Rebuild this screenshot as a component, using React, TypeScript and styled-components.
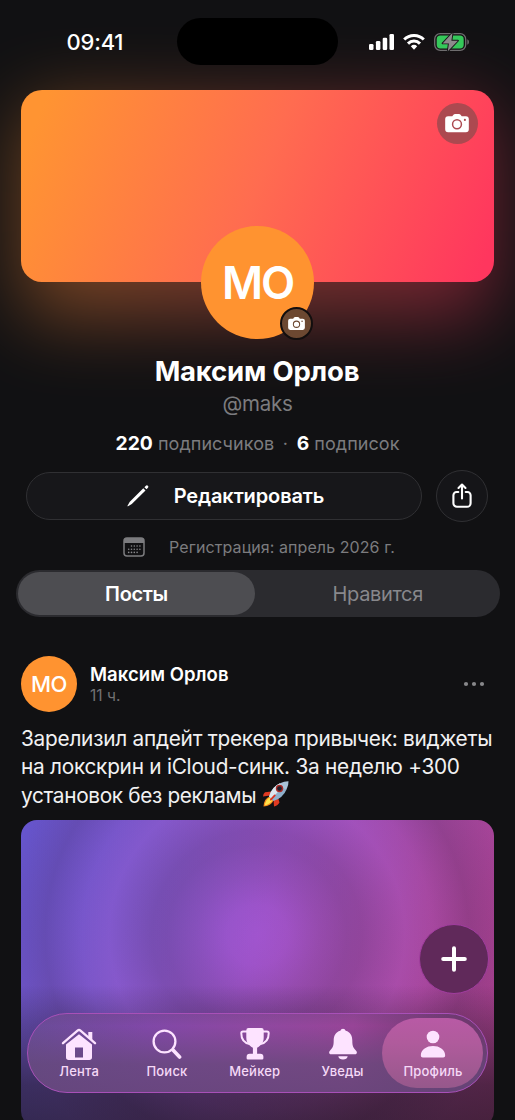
import React from "react";
import styled, { createGlobalStyle } from "styled-components";

const GlobalStyle = createGlobalStyle`
  *, *::before, *::after { box-sizing: border-box; }
  html, body { margin: 0; padding: 0; background: #111113; }
  body { height: 1120px; overflow: hidden; }
`;

const Screen = styled.main`
  position: relative;
  isolation: isolate;
  width: 515px;
  height: 1120px;
  overflow: hidden;
  background: #111113;
  color: #fff;
  font-family: Inter, "Liberation Sans", sans-serif;
  display: flex;
  flex-direction: column;
  -webkit-font-smoothing: antialiased;
  > * { flex-shrink: 0; }
`;

/* status bar */
const StatusBar = styled.header`
  display: grid;
  grid-template-columns: 177px 161px 177px;
  align-items: center;
  height: 83px;
`;
const Clock = styled.time`
  padding-left: 66.5px;
  font-size: 22px;
  font-weight: 500;
  letter-spacing: -0.2px;
  line-height: 26px;
`;
const Island = styled.div`
  height: 47px;
  border-radius: 24px;
  background: #000;
`;
const Indicators = styled.div`
  display: flex;
  align-items: center;
  gap: 9px;
  padding-left: 31px;
  svg { display: block; }
`;

/* profile header */
const Banner = styled.div`
  position: relative;
  height: 192px;
  margin: 7px 21px 0;
  display: flex;
  justify-content: flex-end;
  padding: 13px 16.5px;
  border-radius: 21px;
  background: linear-gradient(112deg, #ff9432 5%, #ff6c50 50%, #ff365e 97%);
  &::before {
    content: "";
    position: absolute;
    z-index: -1;
    inset: 16px 2px -36px;
    border-radius: 20px;
    background: linear-gradient(100deg, #ff9633 0%, #ff6a51 50%, #ff335f 100%);
    filter: blur(38px);
    opacity: 0.42;
  }
`;
const CameraButton = styled.button`
  width: 41px;
  height: 41px;
  padding: 0;
  border: 0;
  border-radius: 50%;
  display: grid;
  place-items: center;
  background: #ac4950;
`;
const Avatar = styled.div<{ $size: number }>`
  position: relative;
  flex: none;
  width: ${(p) => p.$size}px;
  height: ${(p) => p.$size}px;
  border-radius: 50%;
  background: #ff9330;
  display: grid;
  place-items: center;
  font-size: ${(p) => (p.$size > 80 ? 44.5 : 22)}px;
  font-weight: ${(p) => (p.$size > 80 ? 600 : 500)};
  letter-spacing: ${(p) => (p.$size > 80 ? -2 : -0.4)}px;
`;
const AvatarBadge = styled.span`
  position: absolute;
  right: 1px;
  bottom: -1px;
  width: 33px;
  height: 33px;
  border: 2.5px solid #120e0e;
  border-radius: 50%;
  display: grid;
  place-items: center;
  background: #6c4831;
`;
const Profile = styled.section`
  display: flex;
  flex-direction: column;
  align-items: center;
  margin-top: -56px;
  position: relative;
`;
const Name = styled.h1`
  margin: 15px 1px 0 0;
  font-size: 27.5px;
  line-height: 34px;
  font-weight: 700;
  letter-spacing: -0.2px;
`;
const Handle = styled.div`
  margin-top: 3px;
  font-size: 20.5px;
  line-height: 25px;
  letter-spacing: -0.3px;
  color: #7c7c7f;
`;
const Stats = styled.div`
  margin-top: 14px;
  font-size: 18px;
  line-height: 26px;
  letter-spacing: 0.05px;
  color: #7c7c7f;
  b { font-size: 19.3px; color: #fff; font-weight: 700; letter-spacing: 0; }
`;
const Dot = styled.span`
  margin: 0 3.5px;
`;
const Actions = styled.div`
  margin: 13px 2px 0 0;
  width: 462px;
  display: flex;
  align-items: center;
  justify-content: space-between;
`;
const EditButton = styled.button`
  width: 396px;
  height: 48px;
  border: 1px solid #303033;
  border-radius: 24px;
  background: #17171a;
  color: #fff;
  display: flex;
  align-items: center;
  justify-content: center;
  gap: 24px;
  padding: 0 0 0 3px;
  font: 600 20px Inter, sans-serif;
  letter-spacing: -0.12px;
`;
const ShareButton = styled.button`
  width: 52px;
  height: 52px;
  padding: 0;
  border: 1px solid #303033;
  border-radius: 50%;
  background: #151518;
  display: grid;
  place-items: center;
`;
const Joined = styled.div`
  margin-top: 13px;
  height: 24px;
  display: flex;
  align-items: center;
  gap: 24px;
  padding-left: 3px;
  font-size: 16px;
  letter-spacing: 0.08px;
  color: #7c7c7f;
`;
const Tabs = styled.div`
  margin: 11px 15.5px 0 16px;
  height: 47px;
  padding: 2px;
  border-radius: 24px;
  background: #2b2b2f;
  display: flex;
`;
const Tab = styled.button<{ $active?: boolean }>`
  flex: ${(p) => (p.$active ? "0 0 237px" : "1")};
  border: 0;
  padding: ${(p) => (p.$active ? 0 : "0 0 0 3px")};
  border-radius: 22px;
  background: ${(p) => (p.$active ? "#4d4d51" : "transparent")};
  color: ${(p) => (p.$active ? "#fff" : "#88888c")};
  font: ${(p) => (p.$active ? 600 : 400)} 20px Inter, sans-serif;
  letter-spacing: -0.35px;
`;

/* post */
const Post = styled.article`
  margin: 39px 21px 0;
  display: flex;
  flex-direction: column;
`;
const PostHeader = styled.div`
  display: flex;
  align-items: center;
  height: 56px;
`;
const Author = styled.div`
  flex: 1;
  padding: 2px 0 0 13px;
`;
const AuthorName = styled.div`
  font-size: 18.5px;
  line-height: 22px;
  font-weight: 600;
  letter-spacing: 0.05px;
`;
const PostTime = styled.div`
  font-size: 15.5px;
  line-height: 22px;
  color: #717174;
`;
const MoreButton = styled.button`
  width: 22px;
  height: 20px;
  margin-right: 9px;
  padding: 0;
  border: 0;
  background: none;
  display: grid;
  place-items: center;
`;
const PostText = styled.p`
  margin: 13px 0 0;
  font-size: 20.8px;
  line-height: 28.2px;
  color: #f1f1f2;
`;
const Line = styled.span<{ $track: number }>`
  display: block;
  height: 28.2px;
  white-space: nowrap;
  letter-spacing: ${(p) => p.$track}px;
  svg { vertical-align: -5px; }
`;
const Picture = styled.div`
  margin-top: 10.4px;
  height: 307px;
  border-radius: 16px;
  background:
    linear-gradient(180deg, rgba(17, 17, 19, 0) 165px, rgba(17, 17, 19, 0.26) 205px, rgba(17, 17, 19, 0.58) 265px, rgba(17, 17, 19, 0.66) 307px),
    radial-gradient(circle at 236px 115px,
      rgba(190, 100, 255, 0.22) 0, rgba(190, 100, 255, 0.15) 30px,
      rgba(90, 60, 120, 0.1) 62px, rgba(50, 40, 70, 0.15) 90px, rgba(50, 40, 70, 0.14) 105px,
      rgba(200, 120, 255, 0.1) 148px, rgba(200, 120, 255, 0.03) 175px,
      rgba(50, 30, 60, 0.17) 212px, rgba(50, 30, 60, 0) 260px),
    linear-gradient(108deg, #6656d0 0%, #7c55c6 24%, #9850c0 48%, #a5479f 75%, #aa3e8a 100%);
`;

/* floating controls */
const AddButton = styled.button`
  position: absolute;
  left: 419px;
  top: 924px;
  width: 70px;
  height: 70px;
  padding: 0;
  border: 1px solid #a13d9f;
  border-radius: 50%;
  background: #60295a;
  display: grid;
  place-items: center;
`;
const Dock = styled.nav`
  position: absolute;
  left: 27px;
  top: 1013px;
  width: 461px;
  height: 80px;
  border: 1.5px solid #a850b8;
  border-radius: 40px;
  padding: 4px 3.5px 4px 7.3px;
  display: flex;
  background:
    linear-gradient(180deg, rgba(100, 70, 120, 0.3) 0, rgba(100, 70, 120, 0.08) 12px, rgba(100, 72, 120, 0.75) 50px, rgba(100, 70, 120, 0.85) 100%),
    linear-gradient(95deg, #694c9a 0%, #8348ac 26%, #9348a4 50%, #9c449a 70%, #71366d 92%);
`;
const DockItem = styled.button<{ $active?: boolean }>`
  flex: ${(p) => (p.$active ? "0 0 101px" : "1")};
  margin-left: ${(p) => (p.$active ? -4 : 0)}px;
  border: 0;
  padding: 10px 0 0;
  border-radius: 35px;
  background: ${(p) => (p.$active ? "linear-gradient(180deg, #b85aa5 0, #b05b9c 35%, #96588b 100%)" : "transparent")};
  color: #f5d9f7;
  display: flex;
  flex-direction: column;
  align-items: center;
  gap: 3px;
  font: 500 13px/17px Inter, sans-serif;
  letter-spacing: 0.2px;
  svg { display: block; flex: none; }
`;

const Camera = ({ w, hole }: { w: number; hole: string }) => (
  <svg width={w} height={w * 0.78} viewBox="0 0 24 19">
    <path fill="#fff" d="M3 2.4h4.2l1.2-1.6Q9 0 10 0h4q1 0 1.6.8l1.2 1.6H21a3 3 0 0 1 3 3V15.500a3 3 0 0 1-3 3H3a3 3 0 0 1-3-3V5.400a3 3 0 0 1 3-3Z" />
    <circle cx="12" cy="10.400" r="4.500" fill="none" stroke={hole} strokeWidth="1.500" />
    <circle cx="20" cy="6" r="1.100" fill={hole} />
  </svg>
);

const Signal = () => (
  <svg width="25" height="16" viewBox="0 0 25 16" fill="#fff">
    <rect x="0" y="10" width="4.500" height="6" rx="1.300" />
    <rect x="6.900" y="7" width="4.500" height="9" rx="1.300" />
    <rect x="13.700" y="3.700" width="4.500" height="12.300" rx="1.300" />
    <rect x="20.500" y="0" width="4.500" height="16" rx="1.300" />
  </svg>
);

const Wifi = () => (
  <svg width="22" height="16" viewBox="0 0 22 16" fill="none" stroke="#fff" strokeWidth="3">
    <path d="M1.200 5.500a14 14 0 0 1 19.600 0" />
    <path d="M5 9.600a8.500 8.500 0 0 1 12 0" />
    <path d="M7.800 12.300a4.700 4.700 0 0 1 6.400 0L11 15.700Z" fill="#fff" stroke="none" />
  </svg>
);

const Battery = () => (
  <svg width="35" height="20" viewBox="0 0 35 20">
    <rect x="0.700" y="1.700" width="31" height="16.600" rx="5.500" fill="none" stroke="#6f6d6f" strokeWidth="1.300" />
    <rect x="2.700" y="3.600" width="27" height="12.800" rx="3.700" fill="#35c85a" />
    <path d="M33.300 7.200q1.700.8 1.700 2.800t-1.700 2.800Z" fill="#6f6d6f" />
    <path d="M18.500.8 8.600 11.400h6.300L13.800 19.300 23.900 8.700h-6.500Z" fill="#8d8a8c" stroke="#171517" strokeWidth="1.900" strokeLinejoin="round" paintOrder="stroke" />
  </svg>
);

const Pencil = () => (
  <svg width="24" height="24" viewBox="0 0 24 24" fill="#fff">
    <path d="M17.300 4.200 19.500 6.400 5.800 20 2 22.300Q1.200 22.500 1.500 21.700L3.800 17.800Z" />
    <path d="M18.400 3.200 19.900 1.700Q20.900.9 21.900 1.800t.1 2L20.500 5.300Z" />
  </svg>
);

const Share = () => (
  <svg width="20" height="26" viewBox="0 0 20 26" fill="none" stroke="#fff" strokeWidth="2.100" strokeLinecap="round" strokeLinejoin="round">
    <path d="M6.300 9H4.600a3.200 3.200 0 0 0-3.200 3.200v8a3.600 3.600 0 0 0 3.600 3.600h10a3.600 3.600 0 0 0 3.600-3.600v-8A3.200 3.200 0 0 0 15.400 9h-1.700" />
    <path d="M10 15.500V2M6.500 5 10 1.600 13.500 5" />
  </svg>
);

const Calendar = () => (
  <svg width="22" height="20" viewBox="0 0 22 20">
    <rect x="1" y="1" width="20" height="18" rx="3" fill="none" stroke="#7c7c7f" strokeWidth="1.500" />
    <path d="M1 6V3.500Q1 1 3.500 1h15Q21 1 21 3.500V6Z" fill="#7c7c7f" />
    <g fill="#8a8a8d">
      {[8.5, 11.3, 14.1, 16.9].map((x) => <circle key={x} cx={x} cy="9" r="0.800" />)}
      {[5.7, 8.5, 11.3, 14.1, 16.9].map((x) => <circle key={x} cx={x} cy="12.200" r="0.800" />)}
      {[5.7, 8.5, 11.3, 14.1].map((x) => <circle key={x} cx={x} cy="15.400" r="0.800" />)}
    </g>
  </svg>
);

const Rocket = () => (
  <svg width="27" height="27" viewBox="0 0 27 27">
    <path d="M9.500 10.500 3 11.300Q.5 13.500 1 15.500L8 14.500ZM16 16.500 17.500 21.500Q15.500 25 12 25.500L11.500 18.500Z" fill="#e03a22" />
    <path d="M7.500 15.500Q2 17.500 1.500 25.500 9 25 11.500 19.500Z" fill="#f58a1b" />
    <path d="M7.500 16.500Q3.500 19 2.700 24.500 7.500 23.500 10.500 19.500Z" fill="#ffe24a" />
    <path d="M7 15.500Q10 5.500 18 2.200L24.500 8.500Q21 17 11.500 20Z" fill="#8fb0cc" />
    <path d="M7 15.500Q10 5.500 18 2.200L21 5.500 9.500 17.800Z" fill="#dce6ee" />
    <path d="M18 2.200Q22.500.2 26.500.3 26.700 4.500 24.500 8.500 20 7.500 18 2.200Z" fill="#a9c3d8" />
    <circle cx="17.500" cy="7.500" r="3.700" fill="#a82a26" />
    <circle cx="17.500" cy="7.500" r="2.300" fill="#1d1f2b" />
    <path d="m8.800 18.700 4-4.300" stroke="#d93424" strokeWidth="1.800" strokeLinecap="round" />
  </svg>
);

const Home = () => (
  <svg width="36" height="32" viewBox="0 0 36 32" fill="#fde3ff">
    <path d="M2 15.200 16.500 2.600Q18 1.400 19.500 2.600L34 15.200" fill="none" stroke="#fde3ff" strokeWidth="2.300" strokeLinecap="round" />
    <path d="M27.300 4h4v8.700l-4-3.600Z" />
    <path fillRule="evenodd" d="M5 16.500 18 6.300 31 16.500V29.300a2.700 2.700 0 0 1-2.700 2.700H7.700A2.700 2.700 0 0 1 5 29.300ZM14 19.500V29.500h8V19.500Z" />
  </svg>
);
const Search = () => (
  <svg width="30" height="32" viewBox="0 0 30 32" fill="none" stroke="#fde3ff" strokeLinecap="round">
    <circle cx="12.500" cy="13.500" r="10.900" strokeWidth="2.300" />
    <path d="m21 22 6.600 7" strokeWidth="3.600" />
  </svg>
);
const Trophy = () => (
  <svg width="30" height="32" viewBox="0 0 30 32" fill="#fde3ff">
    <path d="M6.300 2.200Q6.300 0 8.500 0h13q2.200 0 2.200 2.200V9.500c0 5.500-3 8.200-6.600 10.200v6h3.300q3 .2 3 3v1.500q0 1.300-1.300 1.300H7.900q-1.300 0-1.300-1.300v-1.500q0-2.800 3-3h3.300v-6C9.300 17.700 6.300 15 6.300 9.500Z" />
    <path d="M7 3.500H3Q1.300 3.500 1.300 5.200c0 5.800 3 9.800 8.500 10.800M23 3.500h4q1.700 0 1.700 1.700c0 5.800-3 9.800-8.500 10.800" fill="none" stroke="#fde3ff" strokeWidth="2" />
  </svg>
);
const Bell = () => (
  <svg width="28" height="32" viewBox="0 0 28 32" fill="#fde3ff">
    <path d="M11.300 2.700Q12 .8 14 .8t2.700 1.900C21.500 4 23.300 8 23.300 12.500c0 6 1 7.300 4 10.400 1.200 1.400.5 3.300-1.500 3.300H2.200C.2 26.200-.5 24.300.7 22.900c3-3.100 4-4.400 4-10.400C4.700 8 6.500 4 11.300 2.700Z" />
    <path d="M9.300 28.300h9.400q-.7 3.300-4.700 3.300t-4.700-3.300Z" />
  </svg>
);
const Person = () => (
  <svg width="26" height="32" viewBox="0 0 26 32" fill="#fde3ff">
    <circle cx="13" cy="9" r="6.300" />
    <path d="M.8 27.200C1.200 21.500 6.500 18.100 13 18.100s11.800 3.400 12.200 9.100q.1 2.300-2 2.300H2.800q-2.100 0-2-2.300Z" />
  </svg>
);

export default function App() {
  return (
    <>
      <GlobalStyle />
      <Screen>
        <StatusBar>
          <Clock>09:41</Clock>
          <Island />
          <Indicators><Signal /><Wifi /><Battery /></Indicators>
        </StatusBar>
        <Banner>
          <CameraButton aria-label="Обложка"><Camera w={24} hole="#ac4950" /></CameraButton>
        </Banner>
        <Profile>
          <Avatar $size={113}>
            МО
            <AvatarBadge><Camera w={17} hole="#6c4831" /></AvatarBadge>
          </Avatar>
          <Name>Максим Орлов</Name>
          <Handle>@maks</Handle>
          <Stats><b>220</b> подписчиков <Dot>·</Dot> <b>6</b> подписок</Stats>
          <Actions>
            <EditButton><Pencil />Редактировать</EditButton>
            <ShareButton aria-label="Поделиться"><Share /></ShareButton>
          </Actions>
          <Joined><Calendar />Регистрация: апрель 2026 г.</Joined>
        </Profile>
        <Tabs>
          <Tab $active>Посты</Tab>
          <Tab>Нравится</Tab>
        </Tabs>
        <Post>
          <PostHeader>
            <Avatar $size={56}>МО</Avatar>
            <Author>
              <AuthorName>Максим Орлов</AuthorName>
              <PostTime>11 ч.</PostTime>
            </Author>
            <MoreButton aria-label="Ещё">
              <svg width="22" height="6" viewBox="0 0 22 6" fill="#88888b">
                <circle cx="3" cy="3" r="2.100" /><circle cx="11" cy="3" r="2.100" /><circle cx="19" cy="3" r="2.100" />
              </svg>
            </MoreButton>
          </PostHeader>
          <PostText>
            <Line $track={-0.25}>Зарелизил апдейт трекера привычек: виджеты</Line>
            <Line $track={-0.26}>на локскрин и iCloud-синк. За неделю +300</Line>
            <Line $track={-0.34}>установок без рекламы <Rocket /></Line>
          </PostText>
          <Picture />
        </Post>
        <AddButton aria-label="Новый пост">
          <svg width="26" height="26" viewBox="0 0 26 26" stroke="#fff" strokeWidth="4" strokeLinecap="round">
            <path d="M13 2.200v21.600M2.200 13h21.600" />
          </svg>
        </AddButton>
        <Dock>
          <DockItem><Home />Лента</DockItem>
          <DockItem><Search />Поиск</DockItem>
          <DockItem><Trophy />Мейкер</DockItem>
          <DockItem><Bell />Уведы</DockItem>
          <DockItem $active><Person />Профиль</DockItem>
        </Dock>
      </Screen>
    </>
  );
}
